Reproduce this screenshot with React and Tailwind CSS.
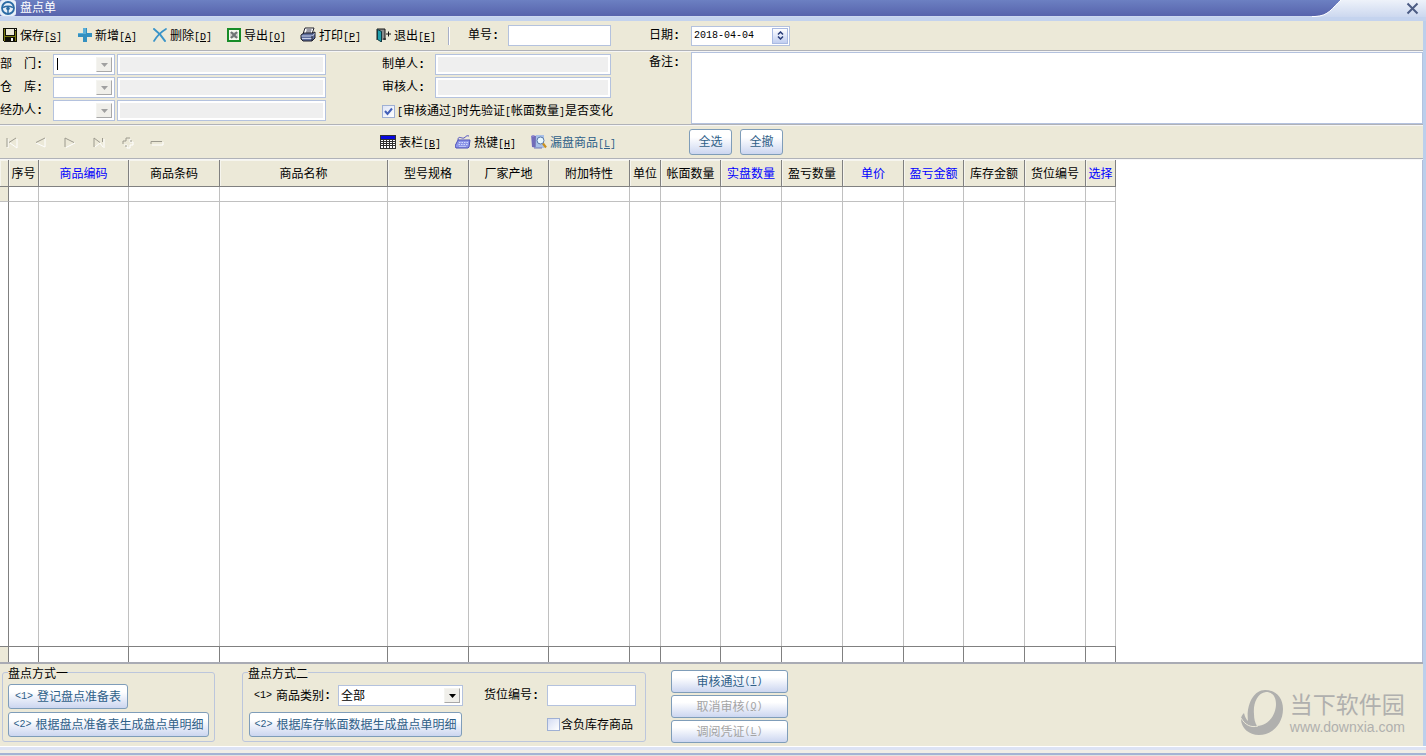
import { clsx } from "clsx";

const FONT = "font-['Liberation_Sans','Noto_Sans_CJK_SC',sans-serif]";

const COLUMNS = [
  { label: "", width: "w-[9px]" },
  { label: "序号", width: "w-[30px]" },
  { label: "商品编码", width: "w-[90px]", editable: true },
  { label: "商品条码", width: "w-[91px]" },
  { label: "商品名称", width: "w-[168px]" },
  { label: "型号规格", width: "w-[81px]" },
  { label: "厂家产地", width: "w-[80px]" },
  { label: "附加特性", width: "w-[81px]" },
  { label: "单位", width: "w-[31px]" },
  { label: "帐面数量", width: "w-[60px]" },
  { label: "实盘数量", width: "w-[61px]", editable: true },
  { label: "盈亏数量", width: "w-[61px]" },
  { label: "单价", width: "w-[61px]", editable: true },
  { label: "盈亏金额", width: "w-[60px]", editable: true },
  { label: "库存金额", width: "w-[61px]" },
  { label: "货位编号", width: "w-[61px]" },
  { label: "选择", width: "w-[30px]", editable: true },
];

/* Icons */
const LogoIcon = () => (
  <svg width="16" height="16" viewBox="0 0 16 16" fill="none">
    <rect width="16" height="16" rx="3" fill="#e8f0f8" />
    <circle cx="8" cy="8" r="6" stroke="#2c6ca4" strokeWidth="1.800" />
    <path d="M3 7.500c3-1.500 7-1.500 10 0M8 9v4.500" stroke="#2c6ca4" strokeWidth="1.500" />
    <circle cx="8" cy="8.500" r="1.800" fill="#2c6ca4" />
  </svg>
);

const SaveIcon = () => (
  <svg width="14" height="14" viewBox="0 0 14 14" shapeRendering="crispEdges">
    <path d="M0 0h14v14H1l-1-1z" fill="#101008" />
    <path d="M1 1h1v12H1zM12 3h1v10h-1zM2 8h10v1H2z" fill="#7c7c10" />
    <rect x="3" y="1" width="8" height="6" fill="#ece9d8" />
    <rect x="8" y="10" width="2" height="3" fill="#f4f4f0" />
    <rect x="12" y="1" width="1" height="1" fill="#ece9d8" />
  </svg>
);

const AddIcon = () => (
  <svg width="14" height="14" viewBox="0 0 14 14">
    <path d="M5 0h4v5h5v4H9v5H5V9H0V5h5z" fill="#3490c0" />
    <path d="M5 0h3v6H0V5h5z" fill="#5cb0d8" />
  </svg>
);

const DeleteIcon = () => (
  <svg width="14" height="14" viewBox="0 0 14 14" fill="none" stroke="#3a94c8" strokeLinecap="round">
    <path d="M1 1c4 3 8 7 11 12" strokeWidth="2" />
    <path d="M13 1C8 4 4 8 1 13" strokeWidth="1.700" />
  </svg>
);

const ExportIcon = () => (
  <svg width="14" height="14" viewBox="0 0 14 14" fill="none">
    <rect x="1" y="1" width="12" height="12" fill="#f4f8f0" stroke="#188c28" strokeWidth="2" />
    <rect x="3" y="4" width="8" height="6" fill="#d0d4d0" />
    <path d="M4 4l6 6M10 4l-6 6" stroke="#6c7474" strokeWidth="2" />
  </svg>
);

const PrintIcon = () => (
  <svg width="16" height="16" viewBox="0 0 16 16">
    <path d="M5 1h9l-2 6H3z" fill="#fff" stroke="#20202c" />
    <path d="M6.500 3h5M6 5h5" stroke="#383850" />
    <path d="M1 8l3-2h9l2-1v6l-3 3H3l-2-2z" fill="#5c6c9c" stroke="#20202c" />
    <path d="M1.500 9h11l2-2.500M2 11.500h10" stroke="#c8d0e8" fill="none" />
    <path d="M12 9v5" stroke="#20202c" />
  </svg>
);

const ExitIcon = () => (
  <svg width="15" height="14" viewBox="0 0 15 14">
    <path d="M1 12V1h8v11" fill="#8c8c8c" stroke="#181818" />
    <path d="M1.500 1.500l4 2V14l-4-2.500z" fill="#20a0ac" stroke="#103840" />
    <path d="M10 6h5M12.500 3.500v5" stroke="#181818" />
    <path d="M7 11h3" stroke="#181818" />
  </svg>
);

const GridIcon = () => (
  <svg width="16" height="14" viewBox="0 0 16 14" shapeRendering="crispEdges">
    <rect width="16" height="14" fill="#303030" />
    <rect x="1" y="1" width="14" height="3" fill="#0808e0" />
    <path
      d="M1 5h2v1H1zM4 5h2v1H4zM7 5h2v1H7zM10 5h2v1h-2zM13 5h2v1h-2zM1 7h2v1H1zM4 7h2v1H4zM7 7h2v1H7zM10 7h2v1h-2zM13 7h2v1h-2zM1 9h2v1H1zM4 9h2v1H4zM7 9h2v1H7zM10 9h2v1h-2zM13 9h2v1h-2zM1 11h2v2H1zM4 11h2v2H4zM7 11h2v2H7zM10 11h2v2h-2zM13 11h2v2h-2z"
      fill="#fff"
    />
  </svg>
);

const KeyboardIcon = () => (
  <svg width="16" height="14" viewBox="0 0 16 14" fill="none">
    <path d="M3 5c0-5 4-1 6-2s2-3 5-2" stroke="#5050c0" />
    <path d="M3 5h12l-1 7-1 1H1l-1-2z" fill="#8c94e8" stroke="#4c50b8" />
    <path d="M4 7.500h9M3.500 9.500h9" stroke="#d0d8fc" strokeDasharray="1.500 1" />
    <path d="M4 11.500h7" stroke="#b8c0f4" />
  </svg>
);

const SearchGoodsIcon = () => (
  <svg width="16" height="15" viewBox="0 0 16 15">
    <path d="M0 2l2-1 3 1v12l-4-1z" fill="#8880cc" />
    <path d="M5 1h8v13H4z" fill="#a8c0e8" />
    <path d="M4 2v11M2 3v10" stroke="#5c58a4" />
    <circle cx="9.500" cy="6.500" r="3.500" fill="#e8f8ff" stroke="#5878a8" />
    <path d="M12 9.500l3 4" stroke="#c89020" strokeWidth="2.200" />
    <path d="M3 14h8" stroke="#6c74b8" />
  </svg>
);

/* d is the shaded upper-left edge, light the highlighted lower-right one */
const NAV_ICONS = [
  { name: "首条", d: "M1 1v9M10 1L3 5.500", light: "M2 2v9M11 2v9L4 6" },
  { name: "上条", d: "M10 1L1 5.500", light: "M1 6l9 4V1" },
  { name: "下条", d: "M1 10V1l9 4.500", light: "M2 10.500l9-4.500" },
  { name: "末条", d: "M1 10V1l6 4.500M9.500 5V1", light: "M2 10l5-4l3 4M11 2v9" },
  { name: "插入", d: "M1 7V4h3V1h4M8 4h2M4 10V8", light: "M8 2v3h3v3H8v3H5V8H2" },
  { name: "移除", d: "M0 7V4.500h11", light: "M1 8h11V5" },
];

const Arrow = ({ className }) => (
  <svg width="7" height="4" viewBox="0 0 7 4" className={className}>
    <path d="M0 0h7L3.500 4z" fill="currentColor" />
  </svg>
);

/* Shortcut letters and numbers */
const Mono = ({ children, className }) => (
  <span className={clsx("font-['Liberation_Mono',monospace] text-[10px]", className)}>
    {children}
  </span>
);

const Colon = () => (
  <span className="font-['Liberation_Mono',monospace] font-bold">:</span>
);

const Hotkey = ({ letter, round }) => (
  <Mono>
    {round ? "(" : "["}
    <u>{letter}</u>
    {round ? ")" : "]"}
  </Mono>
);

const ToolButton = ({ icon, label, letter, className }) => (
  <button
    type="button"
    className={clsx("flex shrink-0 items-center gap-[3px] whitespace-nowrap", className)}
  >
    {icon}
    <span className="pt-[2px]">
      {label}
      <Hotkey letter={letter} />
    </span>
  </button>
);

const PushButton = ({ children, className, disabled }) => (
  <button
    type="button"
    disabled={disabled}
    className={clsx(
      "flex items-center justify-center whitespace-nowrap rounded-[3px] border border-[#7f9db9] bg-linear-to-b from-white from-30% to-[#ccd6f0]",
      disabled ? "text-[#a4a4a4]" : "text-[#2f5f88]",
      className
    )}
  >
    {children}
  </button>
);

const TextBox = ({ id, className, ...rest }) => (
  <input
    id={id}
    type="text"
    className={clsx(
      "h-[21px] border border-[#b4c2de] bg-white px-1 read-only:bg-[#efefef] read-only:shadow-[inset_0_0_0_2px_white] outline-none",
      className
    )}
    {...rest}
  />
);

const ComboBox = ({ id, options, disabled, className, children }) => (
  <div className={clsx("relative h-[21px]", className)}>
    <select
      id={id}
      className="block size-full appearance-none border border-[#b4c2de] bg-white pl-[2px] outline-none"
    >
      {options.map((o) => (
        <option key={o}>{o}</option>
      ))}
    </select>
    <span
      className={clsx(
        "pointer-events-none absolute inset-y-[3px] right-[3px] flex w-4 items-center justify-center border border-t-[#f4f4f0] border-l-[#f4f4f0] border-r-[#a8a8a8] border-b-[#a8a8a8] bg-[#f0efea]",
        disabled ? "text-[#a0a0a0]" : "text-black"
      )}
    >
      <Arrow />
    </span>
    {children}
  </div>
);

const Divider = () => (
  <div className="h-[2px] shrink-0 border-t border-[#b0b2b8] bg-[#f6f6f6]" />
);

const TitleBar = () => (
  <header className="flex h-[21px] shrink-0 border-b-4 border-[#c4d3ee] bg-linear-to-b from-[#eef2fa] to-[#ccd8ef]">
    <div className="flex h-4 flex-1 items-center gap-1 bg-linear-to-b from-[#6c80c2] to-[#5763ac] text-white">
      <LogoIcon />
      <h1>盘点单</h1>
    </div>
    <svg width="30" height="17" viewBox="0 0 30 17" className="shrink-0">
      <defs>
        <linearGradient id="titleBlue" x1="0" y1="0" x2="0" y2="1">
          <stop offset="0" stopColor="#6c80c2" />
          <stop offset="1" stopColor="#5763ac" />
        </linearGradient>
      </defs>
      <path d="M0 0h29C20 8 17 16 3 16H0z" fill="url(#titleBlue)" />
      <path d="M29 0C20 8 17 16 3 16.500H0" fill="none" stroke="#fff" />
    </svg>
    <div className="flex w-[84px] justify-end pr-[7px]">
      <button type="button" aria-label="关闭" className="flex h-4 items-center">
        <svg width="13" height="13" viewBox="0 0 13 13" stroke="#4c5c84" strokeWidth="2">
          <path d="M1.500 1.500l10 10M11.500 1.500l-10 10" />
        </svg>
      </button>
    </div>
  </header>
);

const Toolbar = () => (
  <div className="flex h-[29px] shrink-0 items-center">
    <div className="flex w-[448px] shrink-0 pl-[3px]">
      <ToolButton className="w-[75px]" icon={<SaveIcon />} label="保存" letter="S" />
      <ToolButton className="w-[75px]" icon={<AddIcon />} label="新增" letter="A" />
      <ToolButton className="w-[74px]" icon={<DeleteIcon />} label="删除" letter="D" />
      <ToolButton className="w-[73px]" icon={<ExportIcon />} label="导出" letter="O" />
      <ToolButton className="w-[76px]" icon={<PrintIcon />} label="打印" letter="P" />
      <ToolButton icon={<ExitIcon />} label="退出" letter="E" />
    </div>
    <div className="h-[18px] w-[2px] border-r border-white bg-[#a8b0c8]" />
    <label htmlFor="billNo" className="w-[58px] shrink-0 pl-[18px]">单号<Colon /></label>
    <TextBox id="billNo" className="w-[103px]" />
    <label htmlFor="billDate" className="w-20 shrink-0 pl-[38px]">日期<Colon /></label>
    <div className="flex h-5 w-[99px] border border-[#b4c2de] bg-white">
      <input
        id="billDate"
        type="text"
        defaultValue="2018-04-04"
        className="w-[80px] pl-[2px] font-['Liberation_Mono',monospace] text-[10px] outline-none"
      />
      <button
        type="button"
        aria-label="选择日期"
        className="my-px flex w-4 flex-col items-center justify-center gap-[2px] border border-[#a9bae2] bg-linear-to-b from-white to-[#c0cef0] text-[#283c78]"
      >
        <svg width="7" height="9" viewBox="0 0 7 9" fill="none" stroke="currentColor" strokeWidth="1.500">
          <path d="M1 3.500L3.500 1L6 3.500M1 5.500L3.500 8L6 5.500" />
        </svg>
      </button>
    </div>
  </div>
);

const LookupRow = ({ id, label, children }) => (
  <div className="flex">
    <label htmlFor={id} className="w-[53px] leading-5">{label}<Colon /></label>
    <ComboBox id={id} options={[""]} disabled className="w-[62px]">
      {children}
    </ComboBox>
    <TextBox readOnly aria-label={label} className="ml-[2px] w-[209px]" />
  </div>
);

const BillForm = () => (
  <div className="flex h-[72px] shrink-0">
    <div className="flex w-[382px] shrink-0 flex-col gap-[2px] pt-[2px]">
      <LookupRow id="dept" label="部　门">
        <span className="absolute top-1 left-1 h-3 w-px bg-black" />
      </LookupRow>
      <LookupRow id="store" label="仓　库" />
      <LookupRow id="handler" label="经办人" />
    </div>
    <div className="flex w-[267px] shrink-0 flex-col gap-[2px] pt-[2px]">
      <div className="flex">
        <label htmlFor="maker" className="w-[53px] leading-5">制单人<Colon /></label>
        <TextBox id="maker" readOnly className="w-[176px]" />
      </div>
      <div className="flex">
        <label htmlFor="auditor" className="w-[53px] leading-5">审核人<Colon /></label>
        <TextBox id="auditor" readOnly className="w-[176px]" />
      </div>
      <label className="flex h-[23px] items-center gap-[2px] whitespace-nowrap">
        <span className="relative flex">
          <input
            type="checkbox"
            defaultChecked
            className="peer size-[13px] appearance-none border border-[#9fb0d4] bg-linear-to-br from-[#dfe5f5] to-white"
          />
          <svg
            width="9"
            height="9"
            viewBox="0 0 9 9"
            fill="none"
            className="pointer-events-none absolute top-[2px] left-[2px] hidden peer-checked:block"
          >
            <path d="M1 4l2.500 3L8 1.500" stroke="#4360b8" strokeWidth="2" />
          </svg>
        </span>
        <span>
          <Mono>[</Mono>审核通过<Mono>]</Mono>时先验证<Mono>[</Mono>帐面数量<Mono>]</Mono>是否变化
        </span>
      </label>
    </div>
    <label htmlFor="remark" className="w-[42px] shrink-0 leading-5">备注<Colon /></label>
    <textarea
      id="remark"
      className="min-w-0 flex-1 resize-none border border-[#b4c2de] bg-white outline-none"
    />
  </div>
);

const GridToolbar = () => (
  <div className="flex h-8 shrink-0 items-center">
    <div className="flex w-[380px] shrink-0 gap-[18px] pl-[6px]">
      {NAV_ICONS.map(({ name, d, light }) => (
        <button key={name} type="button" disabled aria-label={name}>
          <svg width="11" height="11" viewBox="0 0 11 11" fill="none" className="overflow-visible">
            <path d={light} stroke="#fff" />
            <path d={d} stroke="#9c9a8e" />
          </svg>
        </button>
      ))}
    </div>
    <ToolButton className="w-[75px]" icon={<GridIcon />} label="表栏" letter="B" />
    <ToolButton className="w-[76px]" icon={<KeyboardIcon />} label="热键" letter="H" />
    <ToolButton
      className="w-[158px] text-[#2f5f88]"
      icon={<SearchGoodsIcon />}
      label="漏盘商品"
      letter="L"
    />
    <PushButton className="h-[26px] w-[43px]">全选</PushButton>
    <PushButton className="ml-2 h-[26px] w-[43px]">全撤</PushButton>
  </div>
);

const GridRow = ({ rowClass, cellClass, filledGutter }) => (
  <tr className={rowClass}>
    {COLUMNS.map(({ label }, i) => (
      <td
        key={label}
        className={clsx(
          "border-r p-0",
          cellClass,
          i === 0 && "border-r-[#808080]",
          i === 0 && filledGutter && "bg-[#ece9d8]"
        )}
      />
    ))}
  </tr>
);

const GoodsGrid = () => (
  <div className="flex min-h-[200px] flex-1 border-r border-[#b4bcd8] bg-white">
    <table className="w-[1116px] table-fixed border-separate border-spacing-0">
      <thead>
        <tr className="h-[27px]">
          {COLUMNS.map(({ label, width, editable }) => (
            <th
              key={label}
              className={clsx(
                "overflow-hidden border-r border-b border-[#808080] bg-[#ece9d8] p-0 pt-[2px] text-center font-normal whitespace-nowrap shadow-[inset_1px_1px_0_#f6f5ee]",
                width,
                editable && "text-[#0000ff]"
              )}
            >
              {label}
            </th>
          ))}
        </tr>
      </thead>
      <tbody>
        <GridRow rowClass="h-[15px]" cellClass="border-b border-[#c0c0c0]" filledGutter />
        <GridRow cellClass="border-[#c0c0c0]" />
      </tbody>
      <tfoot>
        <GridRow rowClass="h-4" cellClass="border-t border-[#808080]" filledGutter />
      </tfoot>
    </table>
  </div>
);

const BottomPanel = () => (
  <footer className="flex h-[84px] shrink-0 items-start border-t-2 border-[#a9abb4] pl-[2px]">
    <fieldset className="w-[213px] shrink-0 rounded-[3px] border border-[#bcc6dc] px-[5px] pb-1">
      <legend className="h-4 leading-5">盘点方式一</legend>
      <div className="flex flex-col items-start gap-[3px] pt-1">
        <PushButton className="h-[25px] w-[120px]">
          <Mono className="mr-1">&lt;1&gt;</Mono> 登记盘点准备表
        </PushButton>
        <PushButton className="h-[25px] w-[201px]">
          <Mono className="mr-1">&lt;2&gt;</Mono> 根据盘点准备表生成盘点单明细
        </PushButton>
      </div>
    </fieldset>

    <fieldset className="ml-[27px] w-[404px] shrink-0 rounded-[3px] border border-[#bcc6dc] px-[5px] pb-1">
      <legend className="h-4 leading-5">盘点方式二</legend>
      <div className="flex items-center pt-[5px] pl-[6px]">
        <label htmlFor="category" className="flex w-[84px] items-center whitespace-nowrap">
          <Mono className="mr-1">&lt;1&gt;</Mono> 商品类别<Colon />
        </label>
        <ComboBox id="category" options={["全部"]} className="w-[125px]" />
        <label htmlFor="slot" className="w-[84px] pl-[21px] whitespace-nowrap">货位编号<Colon /></label>
        <TextBox id="slot" className="w-[89px]" />
      </div>
      <div className="flex items-center pt-[6px] pl-px">
        <PushButton className="h-[25px] w-[213px]">
          <Mono className="mr-1">&lt;2&gt;</Mono> 根据库存帐面数据生成盘点单明细
        </PushButton>
        <label className="ml-[85px] flex items-center gap-px whitespace-nowrap">
          <input
            type="checkbox"
            className="size-[13px] appearance-none border border-[#9fb0d4] bg-linear-to-br from-[#d4dcf2] to-white checked:bg-[#4360b8]"
          />
          含负库存商品
        </label>
      </div>
    </fieldset>

    <div className="ml-[25px] flex w-[117px] shrink-0 flex-col gap-[2px] pt-[6px]">
      <PushButton className="h-[23px]">
        审核通过
        <Hotkey letter="T" round />
      </PushButton>
      <PushButton className="h-[23px]" disabled>
        取消审核
        <Hotkey letter="Q" round />
      </PushButton>
      <PushButton className="h-[23px]" disabled>
        调阅凭证
        <Hotkey letter="L" round />
      </PushButton>
    </div>

    {/* Brand */}
    <div className="ml-auto flex items-center gap-[6px] pt-[26px] pr-[18px] text-[#b0b0ae]">
      <svg width="43" height="45" viewBox="0 0 43 45" fill="currentColor">
        <path
          fillRule="evenodd"
          d="M24 0C35 0 42 8 42 19C42 34 31 45 18 45C8 45 0 38 0 29C0 27 1 25 3 23C4 27 5 29 7 31C5 16 12 0 24 0ZM25 2C16 3 12 14 13 24C13 29 14 33 16 36C27 36 35 25 35 14C35 6 31 2 25 2Z"
        />
        <path d="M0 28C4 35 10 38 17 36" fill="none" stroke="#ece9d8" strokeWidth="1" />
      </svg>
      <div className="whitespace-nowrap">
        <div className="text-[23px] leading-7">当下软件园</div>
        <div className="text-sm leading-4">www.downxia.com</div>
      </div>
    </div>
  </footer>
);

const App = () => {
  return (
    <div className={clsx("flex min-h-screen flex-col bg-[#ece9d8] text-xs text-black", FONT)}>
      <TitleBar />
      <main className="flex flex-1 flex-col border-r-[3px] border-[#bccfec]">
        <Toolbar />
        <Divider />
        <BillForm />
        <Divider />
        <GridToolbar />
        <Divider />
        <GoodsGrid />
        <BottomPanel />
      </main>
      <div className="h-[10px] shrink-0 border-b border-[#e4e4e0]">
        <div className="h-1 border-t border-white bg-[#dde3f4]" />
        <div className="h-[5px] border-b-2 border-[#a4b4d4] bg-[#f0eee6]" />
      </div>
    </div>
  );
};

export default App;
